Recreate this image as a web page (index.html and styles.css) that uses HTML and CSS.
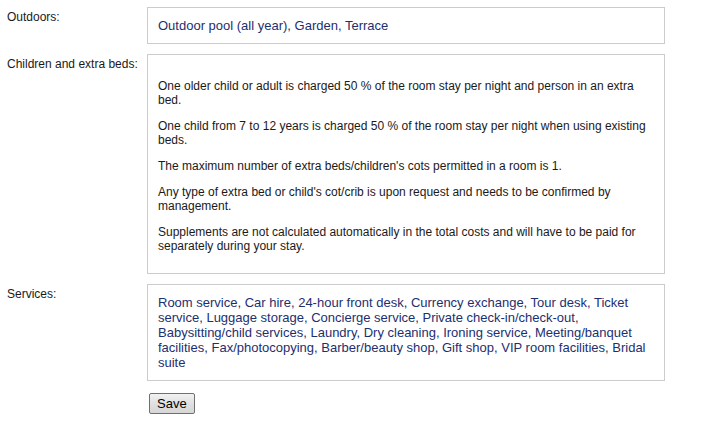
FILE: index.html
```html
<!DOCTYPE html>
<html lang="en">

<head>
    <meta charset="UTF-8">
    <meta name="viewport" content="width=device-width, initial-scale=1.0">
    <title>Facilities</title>
    <link rel="stylesheet" href="styles.css">
</head>

<body>
    <form class="facilities">
        <div class="row">
            <label>Outdoors:</label>
            <div class="box">Outdoor pool (all year), Garden, Terrace</div>
        </div>
        <div class="row">
            <label>Children and extra beds:</label>
            <div class="box policy">
                <p>One older child or adult is charged 50 % of the room stay per night and person in an extra bed.</p>
                <p>One child from 7 to 12 years is charged 50 % of the room stay per night when using existing beds.</p>
                <p>The maximum number of extra beds/children's cots permitted in a room is 1.</p>
                <p>Any type of extra bed or child's cot/crib is upon request and needs to be confirmed by management.</p>
                <p>Supplements are not calculated automatically in the total costs and will have to be paid for separately during your stay.</p>
            </div>
        </div>
        <div class="row">
            <label>Services:</label>
            <div class="box">Room service, Car hire, 24-hour front desk, Currency exchange, Tour desk, Ticket service, Luggage storage, Concierge service, Private check-in/check-out, Babysitting/child services, Laundry, Dry cleaning, Ironing service, Meeting/banquet facilities, Fax/photocopying, Barber/beauty shop, Gift shop, VIP room facilities, Bridal suite</div>
        </div>
        <div class="row">
            <span></span>
            <div class="actions">
                <button type="button" class="save">Save</button>
            </div>
        </div>
    </form>
</body>

</html>
```

FILE: styles.css
```css
body {
    margin: 0;
    padding: 7px 0 0 7px;
    background: #ffffff;
    font-family: "Liberation Sans", Arial, sans-serif;
}

.facilities {
    display: flex;
    flex-direction: column;
    gap: 10px;
}

.row {
    display: grid;
    grid-template-columns: 140px 518px;
}

label {
    font-size: 12px;
    line-height: 14px;
    color: #1a1a1a;
    padding-top: 3px;
}

.box {
    border: 1px solid #cccccc;
    padding: 10px;
    font-size: 13px;
    line-height: 15px;
    color: #1d2f6f;
}

.policy {
    padding: 24px 10px 20px 10px;
    color: #1a1a1a;
    font-size: 12px;
    line-height: 14px;
}

.policy p {
    margin: 0 0 12px 0;
}

.policy p:last-child {
    margin-bottom: 0;
}

.actions {
    padding: 2px 0 0 2px;
}

.save {
    font-family: "Liberation Sans", Arial, sans-serif;
    font-size: 13px;
    height: 21px;
    padding: 0 7px;
    color: #000000;
    border: 1px solid #707070;
    border-radius: 2px;
    background: linear-gradient(#f2f2f2, #e0e0e0 50%, #d6d6d6);
}
```
